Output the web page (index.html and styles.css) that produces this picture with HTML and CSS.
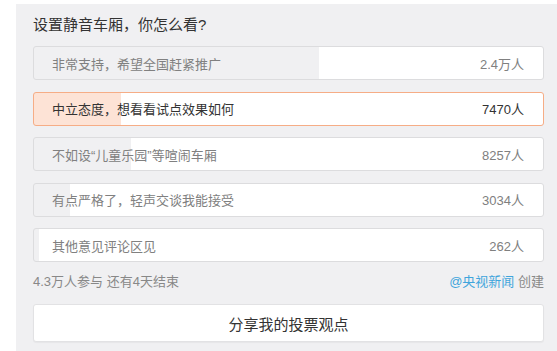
FILE: index.html
```html
<!DOCTYPE html>
<html lang="zh-CN">
<head>
  <meta charset="UTF-8" />
  <title>投票</title>
  <link rel="stylesheet" href="styles.css">
</head>
<body>
  <div class="vote-card">
    <h1 class="vote-title">设置静音车厢，你怎么看?</h1>

    <ul class="vote-options">
      <li class="option" style="--pct: 56%">
        <span class="option-label">非常支持，希望全国赶紧推广</span>
        <span class="option-count">2.4万人</span>
      </li>
      <li class="option selected" style="--pct: 17%">
        <span class="option-label">中立态度，想看看试点效果如何</span>
        <span class="option-count">7470人</span>
      </li>
      <li class="option" style="--pct: 19%">
        <span class="option-label">不如设“儿童乐园”等喧闹车厢</span>
        <span class="option-count">8257人</span>
      </li>
      <li class="option" style="--pct: 7%">
        <span class="option-label">有点严格了，轻声交谈我能接受</span>
        <span class="option-count">3034人</span>
      </li>
      <li class="option" style="--pct: 1%">
        <span class="option-label">其他意见评论区见</span>
        <span class="option-count">262人</span>
      </li>
    </ul>

    <div class="vote-meta">
      <span>4.3万人参与 还有4天结束</span>
      <span><a href="#" class="author">@央视新闻</a> 创建</span>
    </div>

    <button class="share-btn">分享我的投票观点</button>
  </div>
</body>
</html>
```

FILE: styles.css
```css
/* Reset */
* {
  margin: 0;
  padding: 0;
  box-sizing: border-box;
}
body {
  margin: 4px 0 0 16px;
  font-family: "Liberation Sans", "Noto Sans CJK SC", sans-serif;
  color: #333;
  background: #fff;
  overflow: hidden;
}

/* Card */
.vote-card {
  width: 545px;
  min-height: 360px;
  background: #f0f0f2;
  padding: 9px 17px 20px;
}
.vote-title {
  font-size: 15px;
  font-weight: 400;
  line-height: 24px;
  color: #333;
  margin-bottom: 9px;
}

/* Options */
.vote-options {
  list-style: none;
  display: flex;
  flex-direction: column;
  gap: 11.5px;
}
.option {
  height: 34px;
  display: flex;
  align-items: center;
  justify-content: space-between;
  padding: 0 19px 0 18px;
  border: 1px solid #dcdcde;
  border-radius: 3px;
  font-size: 13px;
  color: #808080;
  background: linear-gradient(to right, #f0f0f2 var(--pct), #fff var(--pct));
}
.option.selected {
  border-color: #f6ad86;
  color: #333;
  background: linear-gradient(to right, #fde3d6 var(--pct), #fff var(--pct));
}
.option-count {
  color: #808080;
}
.option.selected .option-count {
  color: #333;
}

/* Footer */
.vote-meta {
  display: flex;
  justify-content: space-between;
  margin-top: 10px;
  line-height: 20px;
  font-size: 13px;
  color: #888;
}
.author {
  color: #3fa5dc;
  text-decoration: none;
}

/* Share */
.share-btn {
  display: block;
  width: 100%;
  height: 38px;
  margin-top: 12px;
  background: #fff;
  border: 1px solid #e2e2e4;
  border-radius: 3px;
  box-shadow: 0 1px 1px rgba(0,0,0,0.04);
  font-family: inherit;
  font-size: 15px;
  color: #333;
  cursor: pointer;
}
```
